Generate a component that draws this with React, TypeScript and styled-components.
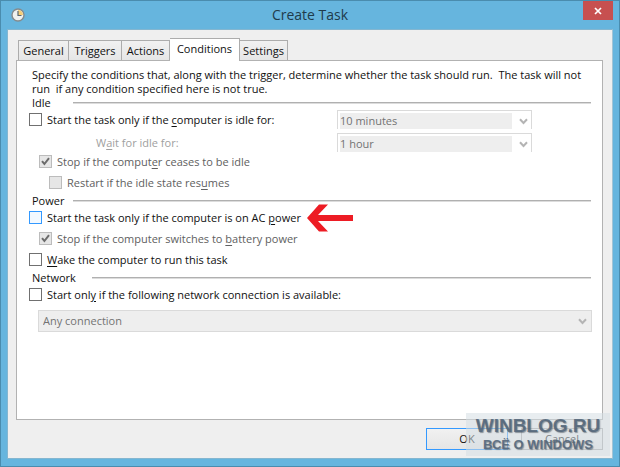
import React, { useId, useState } from "react";
import styled, { createGlobalStyle, css } from "styled-components";

const GlobalStyle = createGlobalStyle`
  * { box-sizing: border-box; }
  body { margin: 0; }
  body, button, select, input {
    font-family: "Open Sans", "Noto Sans", sans-serif;
    font-size: 11px;
    line-height: 14px;
    color: #101010;
  }
  u { text-underline-offset: 2px; }
`;

const Window = styled.main`
  position: relative;
  display: flex;
  flex-direction: column;
  min-height: 100vh;
  padding: 0 6px 7px;
  background: #66b5de;
  border: 1px solid #4a8cae;
`;

const TitleBar = styled.header`
  display: grid;
  grid-template-columns: 30px 1fr 30px;
  height: 28px;
`;

const Title = styled.h1`
  margin: 0;
  text-align: center;
  font-size: 14px;
  line-height: 28px;
  font-weight: 400;
  color: #1f3b4b;
`;

const AppIcon = styled.svg`
  align-self: center;
  margin-left: 4px;
`;

const CloseButton = styled.button`
  display: grid;
  place-items: center;
  height: 19px;
  padding: 0;
  border: 0;
  background: #c75050;
`;

const Client = styled.div`
  flex: 1;
  display: flex;
  flex-direction: column;
  padding: 8px 9px 8px 8px;
  background: #efefef;
  border: 1px solid #84b6d0;
  border-right-color: #a3c4d5;
`;

const TabList = styled.div`
  display: flex;
  align-items: flex-end;
  height: 22px;
  padding-left: 2px;
`;

const Tab = styled.button<{ $selected: boolean; $width: number }>`
  width: ${(p) => p.$width}px;
  height: 20px;
  padding: 0;
  white-space: nowrap;
  border: 1px solid #acacac;
  border-bottom: 0;
  border-left-width: 0;
  background: linear-gradient(#f1f1f1, #e6e6e6);
  &:first-child { border-left-width: 1px; }
  ${(p) =>
    p.$selected &&
    css`
      z-index: 1;
      height: 23px;
      margin-bottom: -1px;
      padding-bottom: 3px;
      background: #fff;
    `}
`;

const Panel = styled.section`
  flex: 1;
  padding: 7px 10px 7px 12px;
  background: #fff;
  border: 1px solid #b2b2b2;
`;

const Description = styled.p`
  margin: 0;
  padding-left: 3px;
  white-space: pre-wrap;
`;

const Group = styled.fieldset`
  min-width: 0;
  margin: 0 0 2px;
  padding: 0;
  border: 0;
`;

const GroupHeader = styled.div<{ $label: number }>`
  display: grid;
  grid-template-columns: ${(p) => p.$label}px 1fr;
  align-items: center;
  padding: 0 1px 0 3px;
`;

const Rule = styled.hr`
  width: 100%;
  height: 2px;
  margin: 0;
  border: 0;
  border-top: 1px solid #b0b0b0;
  background: #dcdcdc;
`;

const Options = styled.div`
  display: flex;
  flex-direction: column;
  gap: 2px;
`;

const IdleFields = styled.div`
  display: grid;
  grid-template-columns: minmax(0, 308px) minmax(0, 195px);
  row-gap: 4px;
`;

const WaitLabel = styled.label`
  align-self: center;
  padding-left: 67px;
  color: #a0a0a0;
`;

const CheckRow = styled.div<{ $level: number }>`
  display: flex;
  align-items: center;
  gap: 5px;
  height: 19px;
  padding-left: ${(p) => p.$level * 10}px;
`;

const CheckCell = styled.span`
  display: grid;
  width: 13px;
  height: 13px;
  > * { grid-area: 1 / 1; }
`;

const CheckInput = styled.input<{ $hot: boolean }>`
  appearance: none;
  width: 13px;
  height: 13px;
  margin: 0;
  border: 1px solid ${(p) => (p.$hot ? "#3399ff" : "#707070")};
  background: ${(p) => (p.$hot ? "#f3f9ff" : "#fff")};
  &:disabled { border-color: #bcbcbc; background: #e6e6e6; }
`;

const CheckMark = styled.svg`
  pointer-events: none;
`;

const CheckLabel = styled.label<{ $dim: boolean }>`
  white-space: nowrap;
  color: ${(p) => (p.$dim ? "#606060" : "#101010")};
`;

const Arrow = styled.svg`
  flex: none;
  margin-left: 1px;
`;

const Combo = styled.div`
  display: grid;
  align-items: center;
  border: 1px solid #dadada;
`;

const IdleCombo = styled(Combo)`
  grid-template-columns: 1fr 15px;
  column-gap: 4px;
  height: 19px;
  padding: 2px 0 0 2px;
  border-bottom: 0;
`;

const WideCombo = styled(Combo)`
  grid-template-columns: 1fr 17px;
  height: 22px;
  margin: 6px 0 0 9px;
  background: #eeeeee;
`;

const Select = styled.select<{ $inset: number }>`
  appearance: none;
  width: 100%;
  height: 100%;
  padding: 0 ${(p) => p.$inset}px;
  border: 0;
  border-radius: 0;
  background: #eeeeee;
  opacity: 1;
  &:disabled { color: #737373; }
`;

const ChevronCell = styled.span`
  display: grid;
  place-items: center;
`;

const Footer = styled.footer`
  display: flex;
  justify-content: flex-end;
  gap: 13px;
  padding-top: 8px;
`;

const DialogButton = styled.button<{ $primary?: boolean }>`
  width: 82px;
  height: 22px;
  padding: 0;
  border: 1px solid ${(p) => (p.$primary ? "#3399ff" : "#acacac")};
  background: linear-gradient(#f1f1f1, #e5e5e5);
`;

const Watermark = styled.aside`
  position: absolute;
  right: 9px;
  bottom: 10px;
  z-index: 2;
  display: grid;
  align-content: center;
  justify-items: center;
  width: 144px;
  height: 43px;
  pointer-events: none;
  background: rgba(214, 222, 228, 0.55);
  color: rgba(83, 102, 122, 0.88);
  font-family: "Liberation Sans", Arial, sans-serif;
  font-weight: 700;
  text-shadow: 1px 1px 1px rgba(80, 90, 100, 0.6);
`;

const SiteName = styled.span`
  font-size: 19px;
  line-height: 20px;
`;

const SiteTagline = styled.span`
  font-size: 13px;
  line-height: 17px;
`;

function Chevron() {
  return (
    <ChevronCell>
      <svg width="9" height="7" viewBox="0 0 9 7" aria-hidden="true">
        <path d="M1 1.2 4.5 5 8 1.2" fill="none" stroke="#b4b4b4" strokeWidth="2" />
      </svg>
    </ChevronCell>
  );
}

function ArrowMark() {
  return (
    <Arrow width="46" height="28" viewBox="0 0 46 28" aria-hidden="true">
      <path d="M0 14 12 0.5h9L11 11h35v6H11l10 10.5h-9z" fill="#ed1c24" />
    </Arrow>
  );
}

type CheckProps = {
  children: React.ReactNode;
  level?: number;
  checked?: boolean;
  disabled?: boolean;
  hot?: boolean;
  after?: React.ReactNode;
};

function Check({ children, level = 0, checked = false, disabled = false, hot = false, after }: CheckProps) {
  const id = useId();
  const [on, setOn] = useState(checked);
  return (
    <CheckRow $level={level}>
      <CheckCell>
        <CheckInput
          id={id}
          type="checkbox"
          checked={on}
          disabled={disabled}
          $hot={hot}
          onChange={(e) => setOn(e.target.checked)}
        />
        {on && (
          <CheckMark width="13" height="13" viewBox="0 0 13 13" aria-hidden="true">
            <path d="M3 6.2 5.4 9 10 3.2" fill="none" stroke="#6b6b6b" strokeWidth="2" />
          </CheckMark>
        )}
      </CheckCell>
      <CheckLabel htmlFor={id} $dim={disabled}>
        {children}
      </CheckLabel>
      {after}
    </CheckRow>
  );
}

function Header({ children, label = 41 }: { children: string; label?: number }) {
  return (
    <GroupHeader $label={label}>
      <span>{children}</span>
      <Rule />
    </GroupHeader>
  );
}

const tabs = [
  { name: "General", width: 51 },
  { name: "Triggers", width: 53 },
  { name: "Actions", width: 48 },
  { name: "Conditions", width: 70 },
  { name: "Settings", width: 48 },
];

export default function App() {
  return (
    <>
      <GlobalStyle />
      <Window>
        <TitleBar>
          <AppIcon width="14" height="14" viewBox="0 0 14 14" aria-hidden="true">
            <circle cx="7" cy="7" r="6" fill="#f0f1ee" stroke="#858b8d" strokeWidth="1.4" />
            <path d="M7 7V2a5 5 0 0 1 5 5z" fill="#f5cd78" />
            <path d="M7 3v4.5h3.5" fill="none" stroke="#596772" strokeWidth="1.2" />
          </AppIcon>
          <Title>Create Task</Title>
          <CloseButton aria-label="Close">
            <svg width="8" height="8" viewBox="0 0 8 8" aria-hidden="true">
              <path d="M1 1l6 6M7 1 1 7" stroke="#fff" strokeWidth="1.7" />
            </svg>
          </CloseButton>
        </TitleBar>
        <Client>
          <TabList role="tablist">
            {tabs.map((tab) => (
              <Tab
                key={tab.name}
                role="tab"
                aria-selected={tab.name === "Conditions"}
                $selected={tab.name === "Conditions"}
                $width={tab.width}
              >
                {tab.name}
              </Tab>
            ))}
          </TabList>
          <Panel role="tabpanel">
            <Description>
              {"Specify the conditions that, along with the trigger, determine whether the task should run.  The task will not\nrun  if any condition specified here is not true."}
            </Description>
            <Group aria-label="Idle">
              <Header>Idle</Header>
              <IdleFields>
                <Check>
                  Start the task only if the <u>c</u>omputer is idle for:
                </Check>
                <IdleCombo>
                  <Select $inset={0} disabled aria-label="Idle time">
                    <option>10 minutes</option>
                  </Select>
                  <Chevron />
                </IdleCombo>
                <WaitLabel htmlFor="wait">
                  W<u>a</u>it for idle for:
                </WaitLabel>
                <IdleCombo>
                  <Select $inset={0} id="wait" disabled>
                    <option>1 hour</option>
                  </Select>
                  <Chevron />
                </IdleCombo>
              </IdleFields>
              <Options>
                <Check level={1} checked disabled>
                  Stop if the comput<u>e</u>r ceases to be idle
                </Check>
                <Check level={2} disabled>
                  Restart if the idle state res<u>u</u>mes
                </Check>
              </Options>
            </Group>
            <Group aria-label="Power">
              <Header>Power</Header>
              <Options>
                <Check hot after={<ArrowMark />}>
                  Start the task only if the computer is on AC <u>p</u>ower
                </Check>
                <Check level={1} checked disabled>
                  Stop if the computer switches to <u>b</u>attery power
                </Check>
                <Check>
                  <u>W</u>ake the computer to run this task
                </Check>
              </Options>
            </Group>
            <Group aria-label="Network">
              <Header label={60}>Network</Header>
              <Check>
                Start onl<u>y</u> if the following network connection is available:
              </Check>
              <WideCombo>
                <Select $inset={4} disabled aria-label="Network connection">
                  <option>Any connection</option>
                </Select>
                <Chevron />
              </WideCombo>
            </Group>
          </Panel>
          <Footer>
            <DialogButton $primary>OK</DialogButton>
            <DialogButton>Cancel</DialogButton>
          </Footer>
        </Client>
        <Watermark>
          <SiteName>WINBLOG.RU</SiteName>
          <SiteTagline>ВСЁ О WINDOWS</SiteTagline>
        </Watermark>
      </Window>
    </>
  );
}
